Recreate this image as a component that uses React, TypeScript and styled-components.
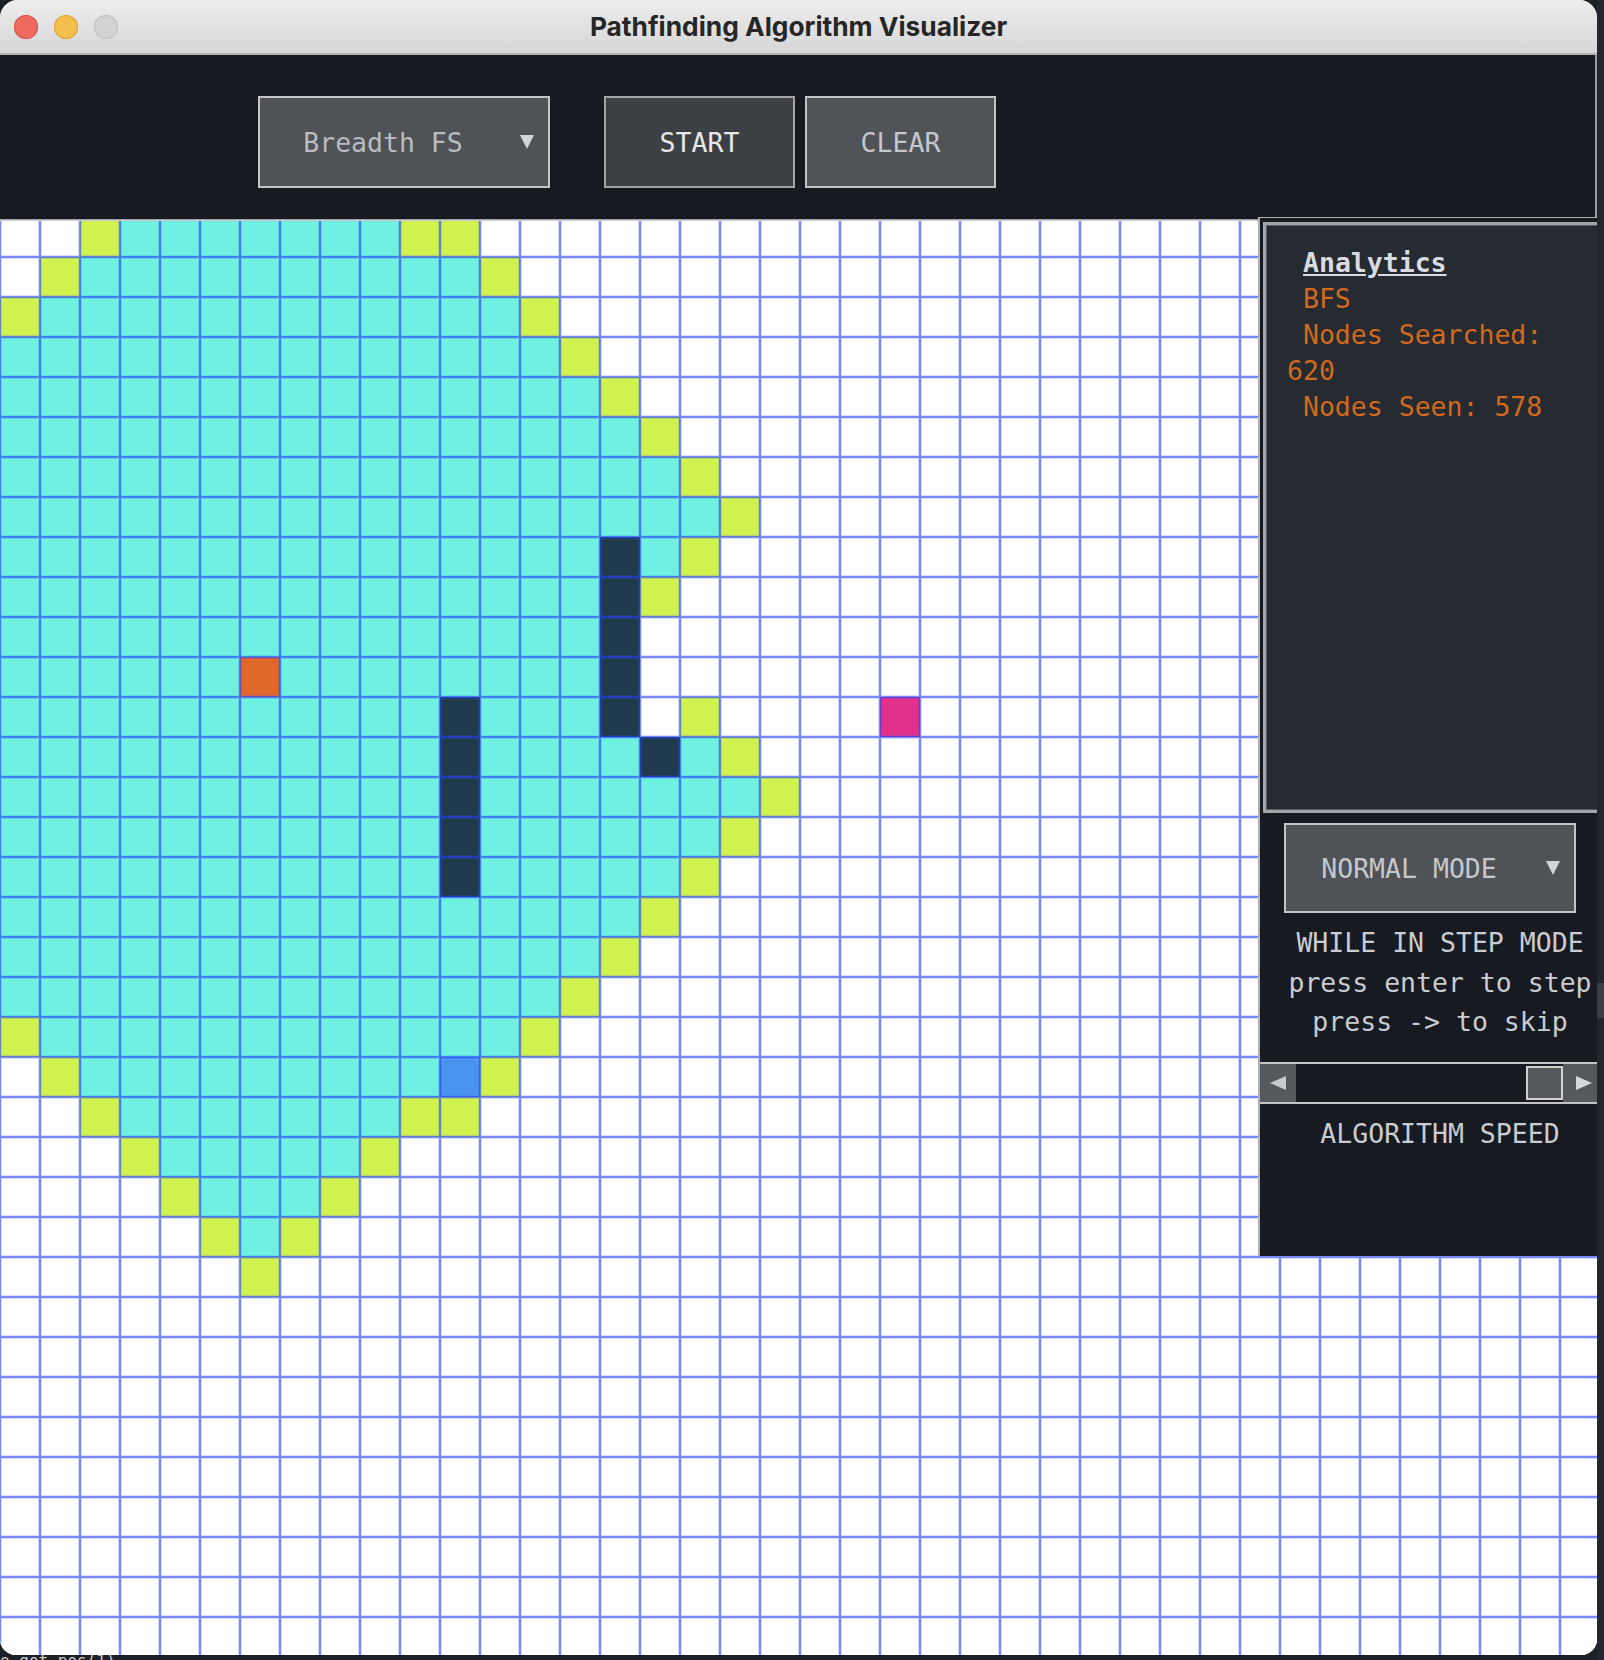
import React from "react";
import styled, { createGlobalStyle } from "styled-components";

type Kind = "w" | "c" | "y" | "d" | "o" | "m" | "b";

const CELL_COLORS: Record<Kind, string> = {
  w: "#ffffff",
  c: "#70f0e0",
  y: "#d0f24e",
  d: "#1e3a4c",
  o: "#e0672a",
  m: "#e0308a",
  b: "#4a94f0",
};

const COLS = 40;
const ROWS = 36;

const ROW_SPECS = [
  "w2y1c7y2",
  "w1y1c10y1",
  "y1c12y1",
  "c14y1",
  "c15y1",
  "c16y1",
  "c17y1",
  "c18y1",
  "c15d1c1y1",
  "c15d1y1",
  "c15d1",
  "c6o1c8d1",
  "c11d1c3d1w1y1w4m1",
  "c11d1c4d1c1y1",
  "c11d1c7y1",
  "c11d1c6y1",
  "c11d1c5y1",
  "c16y1",
  "c15y1",
  "c14y1",
  "y1c12y1",
  "w1y1c9b1y1",
  "w2y1c7y2",
  "w3y1c5y1",
  "w4y1c3y1",
  "w5y1c1y1",
  "w6y1",
];

const expandRow = (spec: string): Kind[] => {
  const out: Kind[] = [];
  spec.replace(/([wcydomb])(\d+)/g, (_m, ch: string, n: string) => {
    for (let i = 0; i < Number(n); i++) out.push(ch as Kind);
    return "";
  });
  while (out.length < COLS) out.push("w");
  return out;
};

const CELLS: Kind[] = Array.from({ length: ROWS }, (_, r) =>
  expandRow(ROW_SPECS[r] ?? "")
).flat();

const GlobalStyle = createGlobalStyle`
  html, body {
    margin: 0;
    padding: 0;
    background: #1d2026;
    overflow: hidden;
  }
  body {
    width: 1604px;
    height: 1660px;
    font-family: "DejaVu Sans Mono", "Liberation Mono", monospace;
  }
  * { box-sizing: border-box; }
`;

const Desktop = styled.div`
  display: flex;
  align-items: flex-start;
  width: 1604px;
  height: 1660px;
  overflow: hidden;
  background: #1d2026;
`;

const Stack = styled.div`
  display: flex;
  flex-direction: column;
  width: 1597px;
  flex: none;
`;

const RightStrip = styled.div`
  flex: 1;
  display: flex;
  flex-direction: column;
  background: #23262c;
  height: 1660px;
`;

const StripMark = styled.div`
  margin-top: 983px;
  height: 35px;
  background: #3a3e45;
`;

const Window = styled.div`
  position: relative;
  z-index: 1;
  width: 1597px;
  height: 1655px;
  border-radius: 18px 18px 16px 16px;
  overflow: hidden;
  background: #ffffff;
  display: flex;
  flex-direction: column;
`;

const TerminalLine = styled.div`
  margin-top: -3px;
  font-family: "DejaVu Sans Mono", monospace;
  font-size: 16px;
  line-height: 18px;
  color: #c8c8c8;
  white-space: pre;
`;

const TitleBar = styled.div`
  height: 55px;
  flex: none;
  background: linear-gradient(#ededed, #d6d6d6);
  border-bottom: 2px solid #b4b4b4;
  display: grid;
  grid-template-columns: 1fr auto 1fr;
  align-items: center;
`;

const Lights = styled.div`
  display: flex;
  gap: 16px;
  padding-left: 14px;
  padding-top: 1px;
`;

const Light = styled.span<{ $color: string; $edge: string }>`
  width: 24px;
  height: 24px;
  border-radius: 50%;
  background: ${(p) => p.$color};
  box-shadow: inset 0 0 0 1px ${(p) => p.$edge};
`;

const Title = styled.div`
  font-family: Inter, "Liberation Sans", sans-serif;
  font-weight: 700;
  font-size: 26.3px;
  color: #262626;
`;

const Toolbar = styled.div`
  height: 162px;
  flex: none;
  background: #171a21;
  border-right: 2px solid #9a9da2;
  display: flex;
  align-items: flex-start;
  gap: 54px;
  padding: 41px 0 0 258px;
`;

const ButtonGroup = styled.div`
  display: flex;
  gap: 10px;
`;

const Dropdown = styled.div`
  width: 292px;
  height: 92px;
  background: #4f5256;
  border: 2px solid #c4c4c4;
  display: flex;
  align-items: center;
  flex: none;
`;

const DropdownText = styled.span<{ $color: string }>`
  flex: 1;
  text-align: center;
  font-size: 26.5px;
  color: ${(p) => p.$color};
  white-space: pre;
`;

const ArrowBox = styled.span`
  width: 42px;
  display: flex;
  justify-content: center;
  align-items: center;
`;

const DownTriangle = styled.span`
  width: 0;
  height: 0;
  border-left: 7px solid transparent;
  border-right: 7px solid transparent;
  border-top: 14px solid #d2d4d8;
`;

const ActionButton = styled.button<{ $active?: boolean }>`
  width: 191px;
  height: 92px;
  margin: 0;
  padding: 0;
  background: ${(p) => (p.$active ? "#3c3f44" : "#505357")};
  border: 2px solid ${(p) => (p.$active ? "#a4a4a4" : "#c4c4c4")};
  color: ${(p) => (p.$active ? "#e8e8e8" : "#c4c7cb")};
  font-family: "DejaVu Sans Mono", monospace;
  font-size: 26.5px;
  cursor: pointer;
`;

const Board = styled.div`
  position: relative;
  flex: 1;
  overflow: hidden;
  background: #ffffff;

  &::before {
    content: "";
    position: absolute;
    top: 0;
    left: 0;
    right: 0;
    height: 4px;
    z-index: 1;
    background: linear-gradient(#171a21 0 2px, #8f9297 2px, #dcdde2 4px);
  }
`;

const Grid = styled.div`
  display: grid;
  grid-template-columns: repeat(${COLS}, 40px);
  grid-auto-rows: 40px;
  width: ${COLS * 40}px;
`;

const Cell = styled.div<{ $kind: Kind }>`
  border: 1px solid rgba(35, 65, 250, 0.62);
  box-shadow: inset 0 0 0 1px rgba(60, 90, 255, 0.2);
  background: ${(p) => CELL_COLORS[p.$kind]};
`;

const SidePanel = styled.div`
  position: absolute;
  z-index: 2;
  top: -1px;
  left: 1258px;
  width: 340px;
  height: 1040px;
  background: #171a21;
  border-left: 2px solid #b0b0b0;
  border-top: 2px solid #b0b0b0;
  display: flex;
  flex-direction: column;
`;

const AnalyticsBox = styled.div`
  margin: 4px -8px 0 3px;
  height: 591px;
  flex: none;
  border: 3px solid #a2a5a9;
  box-shadow: inset 0 0 0 1px #5b5f64;
  background: #262b31;
  padding: 20px 0 0 21px;
  font-size: 26.5px;
  line-height: 36px;
  color: #d2691e;
  white-space: pre;
`;

const AnalyticsTitle = styled.span`
  font-weight: 700;
  color: #d8dce2;
  text-decoration: underline;
  text-decoration-thickness: 2px;
  text-underline-offset: 2px;
`;

const Line = styled.div``;

const ModeSelect = styled(Dropdown)`
  height: 90px;
  margin: 10px 0 0 24px;
`;

const Caption = styled.div<{ $gap: number }>`
  margin-top: ${(p) => p.$gap}px;
  padding-left: 22px;
  text-align: center;
  font-size: 26.5px;
  line-height: 39.5px;
  color: #c9ccd1;
  white-space: pre;
`;

const Scrollbar = styled.div`
  margin-top: 20px;
  height: 42px;
  flex: none;
  border-top: 2px solid #c4c4c4;
  border-bottom: 2px solid #c4c4c4;
  display: flex;
  align-items: stretch;
`;

const ScrollButton = styled.div<{ $width: number; $shift: number }>`
  width: ${(p) => p.$width}px;
  background: #55585d;
  display: flex;
  align-items: center;
  justify-content: center;
  padding-left: ${(p) => p.$shift}px;
  flex: none;
`;

const LeftTriangle = styled.span`
  width: 0;
  height: 0;
  border-top: 7px solid transparent;
  border-bottom: 7px solid transparent;
  border-right: 16px solid #c8cacd;
`;

const RightTriangle = styled.span`
  width: 0;
  height: 0;
  border-top: 7px solid transparent;
  border-bottom: 7px solid transparent;
  border-left: 16px solid #d6d8db;
`;

const Track = styled.div`
  flex: 1;
  display: flex;
  justify-content: flex-end;
  align-items: center;
  background: #171a21;
`;

const Thumb = styled.div`
  width: 37px;
  height: 34px;
  border: 2px solid #d0d0d0;
  background: #55585d;
`;

export default function App() {
  return (
    <>
      <GlobalStyle />
      <Desktop>
        <Stack>
          <Window>
            <TitleBar>
              <Lights>
                <Light $color="#ee6a5f" $edge="#d4574d" />
                <Light $color="#f5bf4f" $edge="#d9a53c" />
                <Light $color="#d3d3d3" $edge="#bdbdbd" />
              </Lights>
              <Title>Pathfinding Algorithm Visualizer</Title>
              <span />
            </TitleBar>
            <Toolbar>
              <Dropdown>
                <DropdownText $color="#b9bcc0">Breadth FS</DropdownText>
                <ArrowBox>
                  <DownTriangle />
                </ArrowBox>
              </Dropdown>
              <ButtonGroup>
                <ActionButton $active>START</ActionButton>
                <ActionButton>CLEAR</ActionButton>
              </ButtonGroup>
            </Toolbar>
            <Board>
              <Grid>
                {CELLS.map((k, i) => (
                  <Cell key={i} $kind={k} />
                ))}
              </Grid>
              <SidePanel>
                <AnalyticsBox>
                  <Line>
                    {" "}
                    <AnalyticsTitle>Analytics</AnalyticsTitle>
                  </Line>
                  <Line> BFS</Line>
                  <Line> Nodes Searched:</Line>
                  <Line>620</Line>
                  <Line> Nodes Seen: 578</Line>
                </AnalyticsBox>
                <ModeSelect>
                  <DropdownText $color="#c5c8cc">NORMAL MODE</DropdownText>
                  <ArrowBox>
                    <DownTriangle />
                  </ArrowBox>
                </ModeSelect>
                <Caption $gap={10}>
                  {"WHILE IN STEP MODE\npress enter to step\npress -> to skip"}
                </Caption>
                <Scrollbar>
                  <ScrollButton $width={36} $shift={0}>
                    <LeftTriangle />
                  </ScrollButton>
                  <Track>
                    <Thumb />
                  </Track>
                  <ScrollButton $width={35} $shift={6}>
                    <RightTriangle />
                  </ScrollButton>
                </Scrollbar>
                <Caption $gap={10}>ALGORITHM SPEED</Caption>
              </SidePanel>
            </Board>
          </Window>
          <TerminalLine>o got pos(1)</TerminalLine>
        </Stack>
        <RightStrip>
          <StripMark />
        </RightStrip>
      </Desktop>
    </>
  );
}
